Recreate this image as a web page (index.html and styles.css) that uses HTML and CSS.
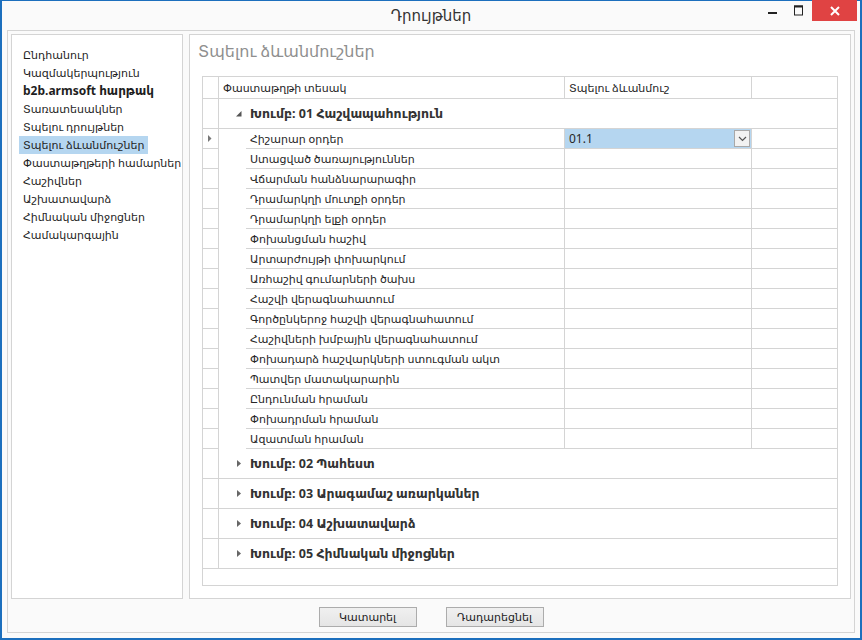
FILE: index.html
```html
<!DOCTYPE html>
<html lang="hy">
<head>
<meta charset="utf-8">
<title>Դրույթներ</title>
<link rel="stylesheet" href="styles.css">
</head>
<body>
<div class="window">
  <div class="titlebar">
    <div class="spacer"></div>
    <div class="title">Դրույթներ</div>
    <div class="controls">
      <span class="ctl"><svg width="10" height="10" viewBox="0 0 10 10"><rect x="0" y="6" width="9" height="2" fill="#222"/></svg></span>
      <span class="ctl"><svg width="10" height="11" viewBox="0 0 10 11"><rect x="0.5" y="1" width="8" height="9" fill="none" stroke="#222" stroke-width="1"/><rect x="0" y="0.5" width="9" height="2" fill="#222"/></svg></span>
      <span class="ctl close"><svg width="10" height="10" viewBox="0 0 10 10"><path d="M1 1 L9 9 M9 1 L1 9" stroke="#fff" stroke-width="2"/></svg></span>
    </div>
  </div>
  <div class="frame">
    <div class="panels">
      <div class="nav">
        <div class="nav-item"><span>Ընդհանուր</span></div>
        <div class="nav-item"><span>Կազմակերպություն</span></div>
        <div class="nav-item bold"><span>b2b.armsoft հարթակ</span></div>
        <div class="nav-item"><span>Տառատեսակներ</span></div>
        <div class="nav-item"><span>Տպելու դրույթներ</span></div>
        <div class="nav-item selected"><span>Տպելու ձևանմուշներ</span></div>
        <div class="nav-item"><span>Փաստաթղթերի համարներ</span></div>
        <div class="nav-item"><span>Հաշիվներ</span></div>
        <div class="nav-item"><span>Աշխատավարձ</span></div>
        <div class="nav-item"><span>Հիմնական միջոցներ</span></div>
        <div class="nav-item"><span>Համակարգային</span></div>
      </div>
      <div class="main">
        <div class="main-title">Տպելու ձևանմուշներ</div>
        <div class="grid">
          <div class="row header">
            <div class="ind"></div>
            <div class="c1 hc">Փաստաթղթի տեսակ</div>
            <div class="c2 hc">Տպելու ձևանմուշ</div>
            <div class="c3"></div>
          </div>
          <div class="row group">
            <div class="ind"></div>
            <div class="gcell"><svg class="tri" width="6" height="6" viewBox="0 0 6 6"><path d="M5.5 0 L5.5 5.5 L0 5.5 Z" fill="#555"/></svg><span>Խումբ: 01 Հաշվապահություն</span></div>
          </div>
          <div class="row data">
            <div class="ind"><svg width="4" height="7" viewBox="0 0 4 7"><path d="M0 0 L3.5 3.5 L0 7 Z" fill="#777"/></svg></div>
            <div class="indent"></div>
            <div class="d1">Հիշարար օրդեր</div>
            <div class="d2 sel"><span>01.1</span><span class="dd"><svg width="9" height="6" viewBox="0 0 9 6"><path d="M1 1 L4.5 4.5 L8 1" fill="none" stroke="#555" stroke-width="1.2"/></svg></span></div>
            <div class="d3"></div>
          </div>
          <div class="row data"><div class="ind"></div><div class="indent"></div><div class="d1">Ստացված ծառայություններ</div><div class="d2"></div><div class="d3"></div></div>
          <div class="row data"><div class="ind"></div><div class="indent"></div><div class="d1">Վճարման հանձնարարագիր</div><div class="d2"></div><div class="d3"></div></div>
          <div class="row data"><div class="ind"></div><div class="indent"></div><div class="d1">Դրամարկղի մուտքի օրդեր</div><div class="d2"></div><div class="d3"></div></div>
          <div class="row data"><div class="ind"></div><div class="indent"></div><div class="d1">Դրամարկղի ելքի օրդեր</div><div class="d2"></div><div class="d3"></div></div>
          <div class="row data"><div class="ind"></div><div class="indent"></div><div class="d1">Փոխանցման հաշիվ</div><div class="d2"></div><div class="d3"></div></div>
          <div class="row data"><div class="ind"></div><div class="indent"></div><div class="d1">Արտարժույթի փոխարկում</div><div class="d2"></div><div class="d3"></div></div>
          <div class="row data"><div class="ind"></div><div class="indent"></div><div class="d1">Առհաշիվ գումարների ծախս</div><div class="d2"></div><div class="d3"></div></div>
          <div class="row data"><div class="ind"></div><div class="indent"></div><div class="d1">Հաշվի վերագնահատում</div><div class="d2"></div><div class="d3"></div></div>
          <div class="row data"><div class="ind"></div><div class="indent"></div><div class="d1">Գործընկերոջ հաշվի վերագնահատում</div><div class="d2"></div><div class="d3"></div></div>
          <div class="row data"><div class="ind"></div><div class="indent"></div><div class="d1">Հաշիվների խմբային վերագնահատում</div><div class="d2"></div><div class="d3"></div></div>
          <div class="row data"><div class="ind"></div><div class="indent"></div><div class="d1">Փոխադարձ հաշվարկների ստուգման ակտ</div><div class="d2"></div><div class="d3"></div></div>
          <div class="row data"><div class="ind"></div><div class="indent"></div><div class="d1">Պատվեր մատակարարին</div><div class="d2"></div><div class="d3"></div></div>
          <div class="row data"><div class="ind"></div><div class="indent"></div><div class="d1">Ընդունման հրաման</div><div class="d2"></div><div class="d3"></div></div>
          <div class="row data"><div class="ind"></div><div class="indent"></div><div class="d1">Փոխադրման հրաման</div><div class="d2"></div><div class="d3"></div></div>
          <div class="row data"><div class="ind"></div><div class="indent"></div><div class="d1">Ազատման հրաման</div><div class="d2"></div><div class="d3"></div></div>
          <div class="row group">
            <div class="ind"></div>
            <div class="gcell"><svg class="tri" width="6" height="7" viewBox="0 0 6 7"><path d="M1 0 L5 3.5 L1 7 Z" fill="#666"/></svg><span>Խումբ: 02 Պահեստ</span></div>
          </div>
          <div class="row group">
            <div class="ind"></div>
            <div class="gcell"><svg class="tri" width="6" height="7" viewBox="0 0 6 7"><path d="M1 0 L5 3.5 L1 7 Z" fill="#666"/></svg><span>Խումբ: 03 Արագամաշ առարկաներ</span></div>
          </div>
          <div class="row group">
            <div class="ind"></div>
            <div class="gcell"><svg class="tri" width="6" height="7" viewBox="0 0 6 7"><path d="M1 0 L5 3.5 L1 7 Z" fill="#666"/></svg><span>Խումբ: 04 Աշխատավարձ</span></div>
          </div>
          <div class="row group">
            <div class="ind"></div>
            <div class="gcell"><svg class="tri" width="6" height="7" viewBox="0 0 6 7"><path d="M1 0 L5 3.5 L1 7 Z" fill="#666"/></svg><span>Խումբ: 05 Հիմնական միջոցներ</span></div>
          </div>
          <div class="grid-fill"></div>
        </div>
      </div>
    </div>
    <div class="buttons">
      <button class="btn">Կատարել</button>
      <button class="btn">Դադարեցնել</button>
    </div>
  </div>
</div>
</body>
</html>
```
FILE: styles.css
```css
* { box-sizing: border-box; }
html, body { margin: 0; padding: 0; background: #fafafa; }
body {
  font-family: "Noto Sans", "DejaVu Sans", sans-serif;
  font-size: 11px;
  color: #1e1e1e;
}
.window {
  width: 862px;
  height: 640px;
  border-top: 1px solid #1c6fbd;
  border-left: 2px solid #1c6fbd;
  border-right: 2px solid #1c6fbd;
  border-bottom: 2px solid #1c6fbd;
  background: #fafafa;
  display: flex;
  flex-direction: column;
}
.titlebar {
  height: 29px;
  display: grid;
  grid-template-columns: 1fr auto 1fr;
  align-items: start;
}
.title {
  font-size: 15px;
  color: #333;
  line-height: 28px;
}
.controls {
  justify-self: end;
  display: flex;
  margin-right: 3px;
  margin-top: -1px;
}
.ctl {
  width: 26px;
  height: 21px;
  display: flex;
  align-items: center;
  justify-content: center;
}
.close {
  width: 45px;
  background: #e04343;
}
.frame {
  margin-left: 5px;
  width: 848px;
  height: 603px;
  border: 1px solid #d4d4d4;
  display: flex;
  flex-direction: column;
}
.panels {
  padding: 3px 3px 0 3px;
  display: flex;
  gap: 6px;
}
.nav {
  width: 172px;
  height: 565px;
  border: 1px solid #d4d4d4;
  background: #fff;
  padding: 11px 0 0 7px;
  font-size: 11px;
}
.nav-item {
  height: 18px;
  line-height: 18px;
  white-space: nowrap;
}
.nav-item span {
  display: inline-block;
  padding: 0 4px;
  height: 18px;
}
.nav-item.bold { font-weight: bold; font-size: 12px; }
.nav-item.selected span { background: #b5d6f0; }
.main {
  width: 662px;
  height: 565px;
  border: 1px solid #d4d4d4;
  background: #fff;
  display: flex;
  flex-direction: column;
}
.main-title {
  padding: 4px 0 0 8px;
  line-height: 24px;
  height: 28px;
  font-size: 16px;
  color: #8f8f8f;
}
.grid {
  margin: 13px 0 0 12px;
  width: 636px;
  height: 510px;
  border: 1px solid #d4d4d4;
  display: flex;
  flex-direction: column;
  color: #262626;
}
.row { display: flex; flex: none; }
.ind {
  width: 16px;
  border-right: 1px solid #d4d4d4;
  border-bottom: 1px solid #d4d4d4;
  display: flex;
  align-items: center;
  justify-content: center;
  padding-right: 1px;
}
.header { height: 22px; }
.header .c1, .header .c2, .header .c3 {
  border-bottom: 1px solid #d4d4d4;
  line-height: 21px;
}
.c1 { width: 346px; border-right: 1px solid #d4d4d4; padding-left: 4px; }
.c2 { width: 187px; border-right: 1px solid #d4d4d4; padding-left: 4px; }
.c3 { flex: 1; }
.group { height: 30px; }
.gcell {
  flex: 1;
  border-bottom: 1px solid #d4d4d4;
  display: flex;
  align-items: center;
  padding-left: 17px;
  font-weight: bold;
  font-size: 12.5px;
  color: #333;
}
.gcell .tri { margin-right: 8px; }
.data { height: 20px; }
.indent { width: 27px; }
.d1, .d2, .d3 {
  border-bottom: 1px solid #d4d4d4;
  line-height: 19px;
  white-space: nowrap;
}
.d1 { width: 319px; border-right: 1px solid #d4d4d4; padding-left: 4px; }
.d2 { width: 187px; border-right: 1px solid #d4d4d4; padding-left: 4px; display: flex; align-items: center; justify-content: space-between; }
.d3 { flex: 1; }
.d2.sel { background: #b5d6f0; padding-right: 1px; font-size: 12px; }
.dd {
  width: 16px;
  height: 17px;
  border: 1px solid #a8a8a8;
  background: #f2f2f2;
  display: flex;
  align-items: center;
  justify-content: center;
}
.grid-fill { flex: 1; }
.buttons {
  flex: 1;
  display: flex;
  justify-content: center;
  align-items: flex-start;
  gap: 29px;
  padding-top: 8px;
}
.btn {
  width: 98px;
  height: 20px;
  border: 1px solid #acacac;
  background: linear-gradient(#f0f0f0, #e5e5e5);
  font-family: "Noto Sans", "DejaVu Sans", sans-serif;
  font-size: 11px;
  color: #222;
  padding: 0;
  line-height: 18px;
}
```
